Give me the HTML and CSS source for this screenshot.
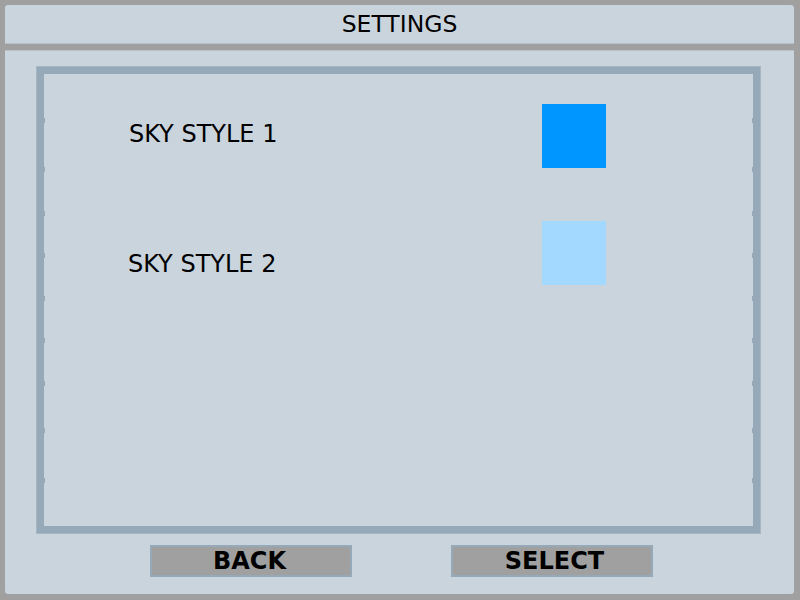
FILE: index.html
```html
<!DOCTYPE html>
<html>
<head>
<meta charset="utf-8">
<link rel="stylesheet" href="styles.css">
</head>
<body>
<div class="screen">
  <header class="header">SETTINGS</header>
  <main class="panel">
    <section class="frame">
      <div class="ticks">
        <span class="tick" style="top:44px"></span>
        <span class="tick" style="top:93px"></span>
        <span class="tick" style="top:137px"></span>
        <span class="tick" style="top:179px"></span>
        <span class="tick" style="top:222px"></span>
        <span class="tick" style="top:264px"></span>
        <span class="tick" style="top:307px"></span>
        <span class="tick" style="top:354px"></span>
        <span class="tick" style="top:404px"></span>
        <span class="tick right" style="top:44px"></span>
        <span class="tick right" style="top:93px"></span>
        <span class="tick right" style="top:137px"></span>
        <span class="tick right" style="top:179px"></span>
        <span class="tick right" style="top:222px"></span>
        <span class="tick right" style="top:264px"></span>
        <span class="tick right" style="top:307px"></span>
        <span class="tick right" style="top:354px"></span>
        <span class="tick right" style="top:404px"></span>
      </div>
      <div class="row row-1">
        <span class="label">SKY STYLE 1</span>
        <span class="swatch swatch-1"></span>
      </div>
      <div class="row row-2">
        <span class="label">SKY STYLE 2</span>
        <span class="swatch swatch-2"></span>
      </div>
    </section>
    <nav class="buttons">
      <button class="btn btn-back">BACK</button>
      <button class="btn btn-select">SELECT</button>
    </nav>
  </main>
</div>
</body>
</html>
```

FILE: styles.css
```css
html, body {
  margin: 0;
  padding: 0;
  background: #a0a0a0;
}

body {
  width: 800px;
  height: 600px;
  overflow: hidden;
  font-family: "DejaVu Sans", sans-serif;
  color: #000;
}

.screen {
  padding: 5px 6px 6px 5px;
  display: flex;
  flex-direction: column;
  gap: 6px;
}

.header {
  height: 38px;
  background: #cad4dc;
  border-bottom: 1px solid #b4c2ce;
  border-radius: 3px 3px 0 0;
  display: flex;
  align-items: center;
  justify-content: center;
  font-size: 23.5px;
  line-height: 28px;
  flex: none;
}

.panel {
  box-sizing: border-box;
  height: 544px;
  flex: none;
  background: #cad4dc;
  border-top: 1px solid #b4c2ce;
  border-radius: 0 0 3px 3px;
  padding: 16px 34px 0 32px;
  display: flex;
  flex-direction: column;
}

.frame {
  position: relative;
  box-sizing: border-box;
  height: 466px;
  flex: none;
  border: 7px solid #95a9b9;
  box-shadow: 0 0 0 1px #a6b6c3;
  padding-top: 30px;
  display: flex;
  flex-direction: column;
  gap: 53px;
}

.ticks {
  position: absolute;
  inset: 0;
}

.tick {
  position: absolute;
  left: 0;
  width: 1px;
  height: 5px;
  background: #95a9b9;
}

.tick.right {
  left: auto;
  right: 0;
}

.row {
  display: grid;
  grid-template-columns: 498px 64px;
  align-items: start;
}

.label {
  padding-left: 85px;
  font-size: 24px;
  line-height: 28px;
}

.row-1 .label {
  margin-top: 16px;
}

.row-2 .label {
  margin-top: 29px;
  padding-left: 84px;
}

.swatch {
  width: 64px;
  height: 64px;
  display: block;
}

.swatch-1 {
  background: #0096ff;
}

.swatch-2 {
  background: #a3d8ff;
}

.buttons {
  margin-top: 12px;
  display: flex;
  justify-content: center;
  gap: 99px;
  padding-left: 6px;
}

.btn {
  width: 202px;
  height: 32px;
  margin: 0;
  padding: 0;
  background: #a0a0a0;
  border: 2px solid #95a9b9;
  font-family: "DejaVu Sans", sans-serif;
  font-weight: bold;
  font-size: 24px;
  line-height: 26px;
  color: #000;
}

.btn-back {
  padding-right: 3px;
}

.btn-select {
  padding-left: 5px;
}
```
